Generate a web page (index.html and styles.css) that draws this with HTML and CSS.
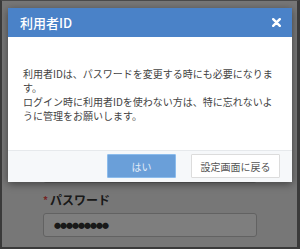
FILE: index.html
```html
<!DOCTYPE html>
<html lang="ja">
<head>
  <meta charset="UTF-8">
  <meta name="viewport" content="width=device-width, initial-scale=1.0">
  <title>利用者ID</title>
  <link rel="stylesheet" href="styles.css">
</head>
<body>
  <div class="screen">
    <!-- 背景のフォーム -->
    <div class="page">
      <div class="field"></div>
      <label class="label"><span class="req">*</span>パスワード</label>
      <div class="field pass">●●●●●●●●●</div>
    </div>

    <!-- モーダル -->
    <div class="overlay">
      <div class="modal">
        <div class="modal-head">
          <h3>利用者ID</h3>
          <svg class="close" width="9" height="9" viewBox="0 0 9 9">
            <path d="M1.2 1.2 L7.8 7.8 M7.8 1.2 L1.2 7.8" stroke="#fff" stroke-width="2.4" stroke-linecap="round"/>
          </svg>
        </div>
        <div class="modal-body">
          <p>利用者IDは、パスワードを変更する時にも必要になります。</p>
          <p>ログイン時に利用者IDを使わない方は、特に忘れないように管理をお願いします。</p>
        </div>
        <div class="modal-foot">
          <button type="button" class="btn primary">はい</button>
          <button type="button" class="btn">設定画面に戻る</button>
        </div>
      </div>
    </div>
  </div>
</body>
</html>
```

FILE: styles.css
```css
* {
  box-sizing: border-box;
}
body {
  margin: 0;
  font-family: "Noto Sans CJK JP", "Noto Sans", sans-serif;
  background: #3a3a3a;
}
.screen {
  position: relative;
  width: 300px;
  height: 249px;
  overflow: hidden;
  border-top: 1px solid #4a4a4a;
  border-left: 2px solid #3a3a3a;
  border-right: 3px solid #3a3a3a;
  border-bottom: 2px solid #3a3a3a;
  background: #eeeeee;
}
.page {
  padding: 158px 0 0 41px;
}
.field {
  width: 214px;
  height: 24px;
  background: #fcfcfc;
  border: 1px solid #c4c4c4;
  border-radius: 3px;
}
.label {
  display: block;
  margin: 10px 0 6px;
  font-size: 12px;
  line-height: 14px;
  font-weight: bold;
  color: #333;
}
.req {
  color: #e84a4a;
  font-size: 10px;
  margin-right: 2px;
  vertical-align: 1px;
}
.pass {
  padding-left: 10px;
  font-size: 7px;
  line-height: 22px;
  letter-spacing: -1px;
  color: #333;
}
.overlay {
  position: absolute;
  top: 0;
  left: 0;
  right: 0;
  bottom: 0;
  background: rgba(0, 0, 0, 0.5);
  padding-top: 7px;
}
.modal {
  width: 284px;
  margin-left: 6px;
  background: #fff;
  box-shadow: 0 2px 8px rgba(0, 0, 0, 0.45);
}
.modal-head {
  height: 29px;
  background: #4a82c8;
  display: flex;
  align-items: center;
  justify-content: space-between;
  padding: 0 11px 0 12px;
}
.modal-head h3 {
  margin: 0;
  font-size: 13px;
  font-weight: 500;
  color: #fff;
}
.close {
  display: block;
}
.modal-body {
  height: 113px;
  padding: 30px 15px 0;
  font-size: 10px;
  line-height: 14px;
  color: #444;
}
.modal-body p {
  margin: 0;
}
.modal-foot {
  height: 32px;
  border-top: 1px solid #e6e9ec;
  background: #f6f8fa;
  display: flex;
  justify-content: flex-end;
  align-items: flex-start;
  gap: 15px;
  padding: 3px 12px 0 0;
}
.btn {
  height: 24px;
  padding: 0;
  font-family: inherit;
  font-size: 10px;
  width: 89px;
  background: #fff;
  color: #555;
  border: 1px solid #dcdcdc;
  border-radius: 1px;
}
.btn.primary {
  width: 69px;
  background: #6a9fd9;
  border-color: #8cbcec;
  color: #e2ecf8;
}
```
